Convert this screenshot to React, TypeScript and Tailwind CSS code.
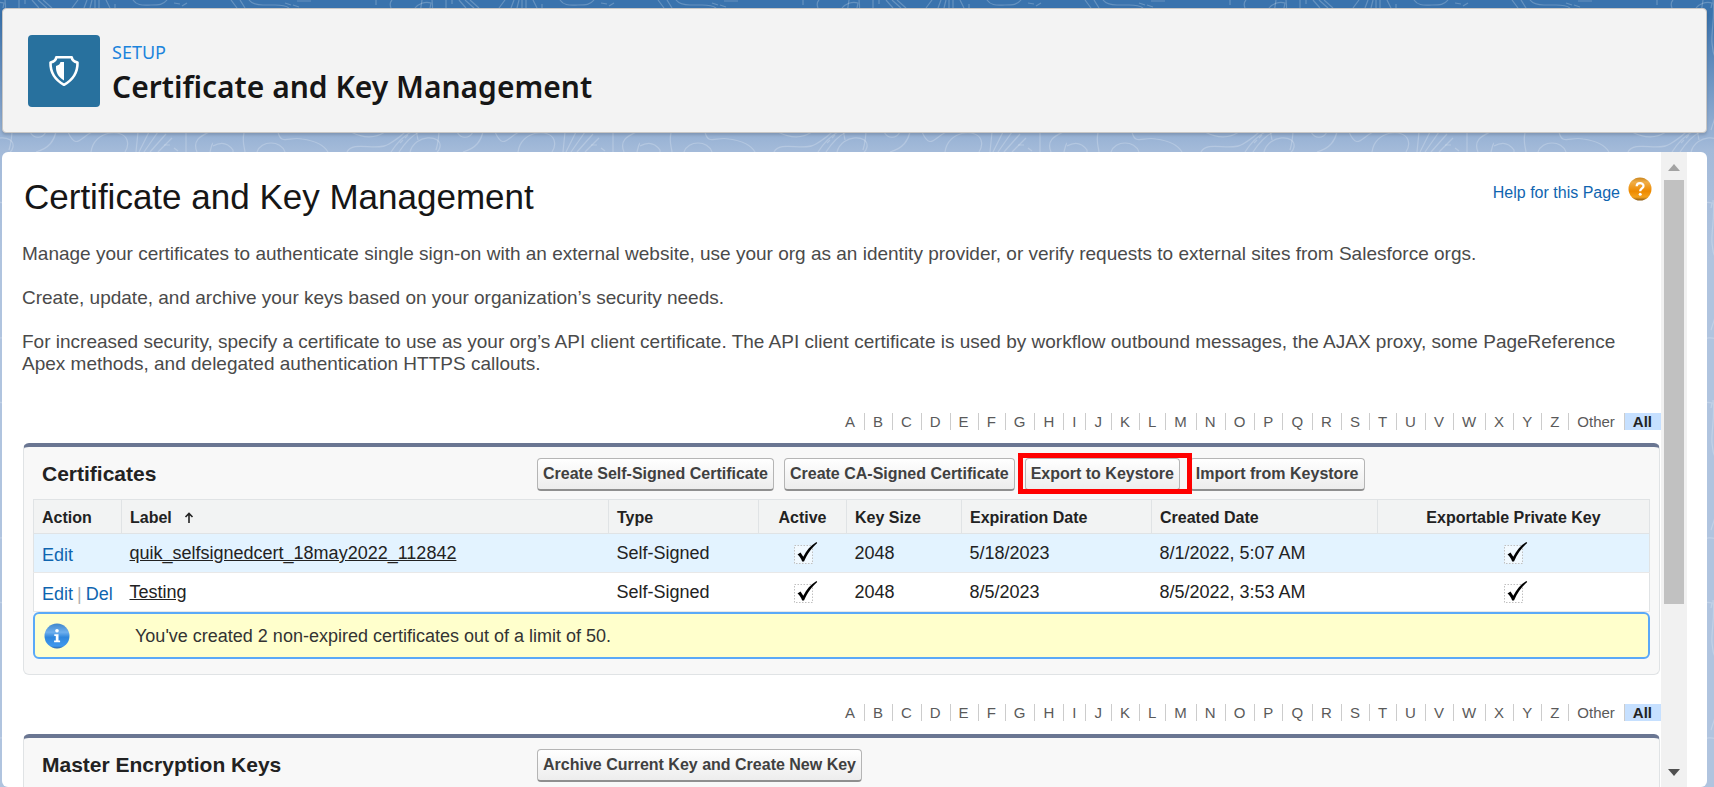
import React from 'react';

const letters = 'ABCDEFGHIJKLMNOPQRSTUVWXYZ'.split('');

const certificates = [
  {
    label: 'quik_selfsignedcert_18may2022_112842',
    type: 'Self-Signed',
    keySize: '2048',
    expires: '5/18/2023',
    created: '8/1/2022, 5:07 AM',
    canDelete: false
  },
  {
    label: 'Testing',
    type: 'Self-Signed',
    keySize: '2048',
    expires: '8/5/2023',
    created: '8/5/2022, 3:53 AM',
    canDelete: true
  }
];

const Backdrop = () => (
  <svg className="absolute inset-0 w-full h-full" aria-hidden="true">
    <defs>
      <pattern id="contours" x="213" y="0" width="427" height="200" patternUnits="userSpaceOnUse">
        <g fill="none" stroke="#ffffff" strokeOpacity="0.22" strokeWidth="1.2">
          <path d="M18 0l6 8M27 0l5 8M36 0q4 5 14 5h12q10 0 14 3M163 0v5M178 8q-2-5 1-8M202 8c3-4 10-7 16-5l-1 5M233 0v8M239 0v4M246 0l7 8M252 0l9 8M257 0l9 8M286 8l6-8M298 8l3-8M304 8l2-8M309 8V0M313 8V0M320 0l4 8M329 4v4M347 0c4 6 10 5 18 5s12 0 16-5" />
          <path d="M72 3l6 2M80 5l6 2M84 1l14 0M388 3l6 1M396 6l5-3" />
          <path d="M0 146q12-7 20 4v2M31 133c-2 8 0 12 1 19M44 152c4-12 24-12 28 0M65 132c3 14 12 4 24 7c14 2 22 6 26 13M138 132c14 7 24 6 34 0M134 152c6-12 30 0 42-8q10-6 16-12M178 152q9-14 20-20M186 152q9-14 20-20M197 152c5-18 32-18 30-5q-1 4-3 5M244 132c4 7 12 7 16 0M250 152c14-4 18-12 20-20M282 132c8 18 12 6 24 0M305 152c3-22 32-24 36-12q2 6-2 12M350 152l2-20M353 152l10-20M358 152l14-20M364 152l16-18M372 152l14-14M400 132v20M411 152c-5-12 4-16 12-20M424 152c2-8 2-8 4-10" />
          <path d="M187 143l3-3M192 138l3-3M378 145h6M388 148l4 3" />
          <path d="M209 0c-6 30 8 50 0 80s-10 30-4 60M219 0c3 24-6 40 3 60s2 50-5 70M226 60c-8 26 6 60-3 90" />
        </g>
      </pattern>
    </defs>
    <rect width="100%" height="100%" fill="url(#contours)" />
  </svg>
);

const ShieldIcon = () => (
  <svg className="w-8 h-8" viewBox="0 0 32 32" fill="none" aria-hidden="true">
    <path d="M8.300 2.300h15.400c.4 2.900 2.200 4.500 5.800 5.300.200 10.200-4.500 17.200-13.500 22.200C7 24.800 2.300 17.800 2.500 7.600c3.600-.8 5.400-2.400 5.800-5.300z" stroke="#fff" strokeWidth="2.600" strokeLinejoin="round" />
    <path d="M16 7v18.500c-6-3.500-8.500-8.500-8-14.500C11 10.200 12 9 12.500 7z" fill="#fff" />
  </svg>
);

const HelpIcon = () => (
  <svg className="w-6 h-6" viewBox="0 0 24 24" aria-hidden="true">
    <defs>
      <linearGradient id="help" x1="0" y1="0" x2="0" y2="1">
        <stop offset="0" stopColor="#c9851f" />
        <stop offset="0.2" stopColor="#f0ae48" />
        <stop offset="0.5" stopColor="#ee9210" />
        <stop offset="0.6" stopColor="#ee8a00" />
        <stop offset="0.85" stopColor="#f5a21c" />
        <stop offset="1" stopColor="#8c5a14" />
      </linearGradient>
    </defs>
    <circle cx="12" cy="12" r="11.500" fill="url(#help)" />
    <path d="M8.700 9.300c0-4.200 6.800-4 6.800-.300 0 2.400-3.300 2.500-3.300 5.200" fill="none" stroke="#fff" strokeWidth="2.300" />
    <circle cx="12.200" cy="17.200" r="1.500" fill="#fff" />
  </svg>
);

const InfoIcon = () => (
  <svg className="w-[26px] h-[26px]" viewBox="0 0 26 26" aria-hidden="true">
    <defs>
      <linearGradient id="info" x1="0" y1="0" x2="0" y2="1">
        <stop offset="0" stopColor="#3f86cc" />
        <stop offset="0.35" stopColor="#6fb0ee" />
        <stop offset="0.55" stopColor="#2f86dc" />
        <stop offset="0.9" stopColor="#3f98ee" />
        <stop offset="1" stopColor="#2a62a4" />
      </linearGradient>
    </defs>
    <circle cx="13" cy="13" r="12.500" fill="url(#info)" />
    <circle cx="13" cy="7.800" r="1.800" fill="#fff" />
    <path d="M10.300 11.200h4.200v6.300h1.600v1.700h-6v-1.700h1.700v-4.600h-1.500z" fill="#fff" />
  </svg>
);

const Checkmark = () => (
  <svg className="inline-block w-6 h-6 align-middle" viewBox="0 0 24 24" role="img" aria-label="Checked">
    <rect x="0.500" y="3.500" width="18" height="18" fill="#fff" fillOpacity="0.500" stroke="#c0c0c0" strokeDasharray="1.500 1.500" />
    <path d="M3.500 12.500l3-2 2.800 4.300C12.500 8.500 16.500 3.500 22.500 0l.700.900C17.500 6 13.500 11.500 10 19.500H8.200C7 16.500 5.500 14 3.500 12.500z" fill="#000" />
  </svg>
);

const Rolodex = () => (
  <nav className="flex justify-end text-[15px] leading-[17px] text-[#5a5a5a]">
    {[...letters, 'Other'].map((item) => (
      <a key={item} href="#" className="pl-2 pr-[9px] border-r border-[#cccccc]">{item}</a>
    ))}
    <a href="#" className="pl-2 pr-[9px] bg-[#c6e0ff] font-bold text-[#222222]">All</a>
  </nav>
);

const SetupButton = ({ children }: { children: React.ReactNode }) => (
  <button className="h-[33px] px-[5px] whitespace-nowrap rounded border border-[#b5b5b5] border-b-2 border-b-[#8f8f8f] bg-linear-to-b from-white to-[#ededed] text-base font-bold text-[#404040]">
    {children}
  </button>
);

const Section = ({ title, actions, children }: { title: string; actions: React.ReactNode; children?: React.ReactNode }) => (
  <section className="ml-[21px] mr-px rounded-md border border-t-4 border-[#e0e3e5] border-t-[#6a7692] bg-[#f8f8f8] px-[9px] pb-[15px]">
    <div className="flex items-center h-[52px] pb-1 pt-[6px]">
      <h3 className="w-[504px] shrink-0 pl-[9px] text-[21px] leading-6 font-bold text-[#222222]">{title}</h3>
      <div className="flex gap-[10px]">{actions}</div>
    </div>
    {children}
  </section>
);

const HeadCell = ({ children, center }: { children: React.ReactNode; center?: boolean }) => (
  <th scope="col" className={`h-[34px] px-2 pt-[2px] border border-[#e0e3e5] font-bold ${center ? 'text-center' : 'text-left'}`}>
    {children}
  </th>
);

const CertificateTable = () => (
  <table className="w-full table-fixed border-collapse border border-[#e0e3e5] bg-white text-lg text-[#222222]">
    <colgroup>
      <col className="w-[88px]" />
      <col />
      <col className="w-[150px]" />
      <col className="w-[88px]" />
      <col className="w-[115px]" />
      <col className="w-[190px]" />
      <col className="w-[226px]" />
      <col className="w-[272px]" />
    </colgroup>
    <thead>
      <tr className="bg-[#f2f3f3] text-base">
        <HeadCell>Action</HeadCell>
        <HeadCell>
          <span className="flex items-center gap-3">
            Label
            <svg className="w-[10px] h-3" viewBox="0 0 10 12" fill="none" stroke="#222" strokeWidth="1.600" aria-hidden="true">
              <path d="M5 11V1.500M1.500 5l3.500-3.500L8.500 5" />
            </svg>
          </span>
        </HeadCell>
        <HeadCell>Type</HeadCell>
        <HeadCell center>Active</HeadCell>
        <HeadCell>Key Size</HeadCell>
        <HeadCell>Expiration Date</HeadCell>
        <HeadCell>Created Date</HeadCell>
        <HeadCell center>Exportable Private Key</HeadCell>
      </tr>
    </thead>
    <tbody>
      {certificates.map((cert) => (
        <tr key={cert.label} className="h-[39px] border-b border-[#e8e8e8] first:bg-[#e3f3ff]">
          <td className="px-2 pt-1 whitespace-nowrap text-[#0f65b0]">
            <a href="#">Edit</a>
            {cert.canDelete && (
              <>
                <span className="px-1 text-[#b0b0b0]">|</span>
                <a href="#">Del</a>
              </>
            )}
          </td>
          <td className="px-2"><a href="#" className="underline">{cert.label}</a></td>
          <td className="px-2">{cert.type}</td>
          <td className="pl-[14px] pr-2 text-center"><Checkmark /></td>
          <td className="px-2">{cert.keySize}</td>
          <td className="px-2">{cert.expires}</td>
          <td className="px-2">{cert.created}</td>
          <td className="pl-[14px] pr-2 text-center"><Checkmark /></td>
        </tr>
      ))}
    </tbody>
  </table>
);

const Scrollbar = () => (
  <div className="flex flex-col items-center w-[26px] shrink-0 bg-[#f1f1f1] pt-[11px] pb-[10px]">
    <svg className="w-3 h-2" viewBox="0 0 12 8" aria-hidden="true"><path d="M0 8l6-7 6 7z" fill="#a3a3a3" /></svg>
    <div className="w-5 h-[69%] mt-[9px] bg-[#c1c1c1]" />
    <svg className="w-3 h-2 mt-auto" viewBox="0 0 12 8" aria-hidden="true"><path d="M0 0l6 7 6-7z" fill="#505050" /></svg>
  </div>
);

const App = () => {
  return (
    <div className="relative h-screen overflow-hidden bg-[#b0c4df] bg-linear-to-b from-[#3a73ad] from-[16px] via-[#a3bad9] via-[150px] to-[#b0c4df] to-[260px] font-['Liberation_Sans',Arial,sans-serif]">
      <Backdrop />
      <div className="relative flex flex-col h-full pt-2 pl-[2px] pr-[7px]">
        <header className="flex items-center gap-3 h-[125px] shrink-0 pl-[25px] rounded border border-[#c9c7c5] bg-[#f3f3f3] shadow-[0_2px_3px_rgba(0,0,0,0.15)]">
          <div className="flex items-center justify-center size-[72px] rounded bg-[#28719e]">
            <ShieldIcon />
          </div>
          <div className="pt-[6px] font-['Noto_Sans','Open_Sans',sans-serif]">
            <p className="text-lg leading-[26px] text-[#1b84dc]">SETUP</p>
            <h1 className="text-3xl leading-[44px] font-semibold text-[#161616]">Certificate and Key Management</h1>
          </div>
        </header>

        <main className="flex flex-1 min-h-0 mt-[19px] pr-5 rounded-md bg-white">
          <div className="flex-1 min-w-0 overflow-hidden">
            <div className="flex items-start justify-between pt-[25px] pl-[22px] pr-[9px]">
              <h2 className="text-[35px] leading-10 text-[#161616]">Certificate and Key Management</h2>
              <a href="#" className="flex items-start gap-2 text-base text-[#0f65b0]">
                <span className="pt-1">Help for this Page</span>
                <HelpIcon />
              </a>
            </div>

            <div className="flex flex-col gap-[22px] pt-[26px] px-5 text-[19px] leading-[22px] text-[#4a4a4a]">
              <p>Manage your certificates to authenticate single sign-on with an external website, use your org as an identity provider, or verify requests to external sites from Salesforce orgs.</p>
              <p>Create, update, and archive your keys based on your organization’s security needs.</p>
              <p>For increased security, specify a certificate to use as your org’s API client certificate. The API client certificate is used by workflow outbound messages, the AJAX proxy, some PageReference Apex methods, and delegated authentication HTTPS callouts.</p>
            </div>

            <div className="pt-[38px] pb-[13px]">
              <Rolodex />
            </div>
            <Section
              title="Certificates"
              actions={
                <>
                  <SetupButton>Create Self-Signed Certificate</SetupButton>
                  <SetupButton>Create CA-Signed Certificate</SetupButton>
                  <div className="relative">
                    <SetupButton>Export to Keystore</SetupButton>
                    <span className="absolute -top-[5px] -bottom-[3px] -left-[7px] -right-3 border-[5px] border-[#ff0000] pointer-events-none" />
                  </div>
                  <SetupButton>Import from Keystore</SetupButton>
                </>
              }
            >
              <CertificateTable />
              <div className="flex items-center h-[47px] pl-[9px] rounded-md border-2 border-[#5aa9f8] bg-[#ffffcc] text-lg text-[#333333]">
                <div className="w-[91px]"><InfoIcon /></div>
                <p>You've created 2 non-expired certificates out of a limit of 50.</p>
              </div>
            </Section>

            <div className="pt-[29px] pb-[13px]">
              <Rolodex />
            </div>
            <Section title="Master Encryption Keys" actions={<SetupButton>Archive Current Key and Create New Key</SetupButton>} />
          </div>
          <Scrollbar />
        </main>
      </div>
    </div>
  );
};

export default App;
